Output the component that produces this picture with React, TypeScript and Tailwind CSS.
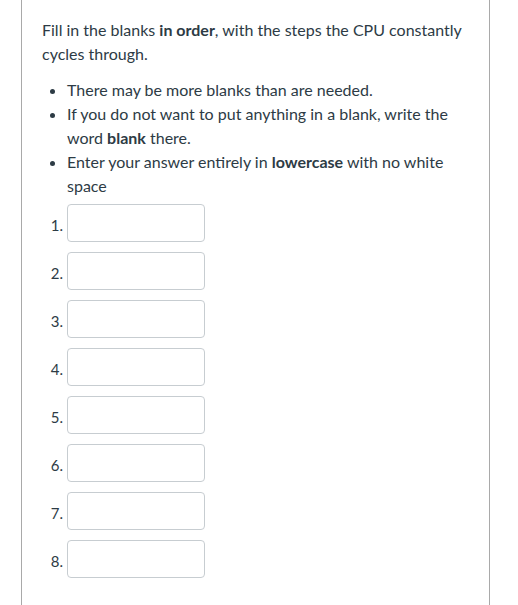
export default function App() {
  const nums = [1, 2, 3, 4, 5, 6, 7, 8];
  return (
    <div className="w-[518px] h-[605px] bg-white overflow-hidden">
      <div className="ml-[21px] w-[469px] h-[605px] border-x border-[#a9a9a9] pl-[20px] pr-[20px] pt-[18px] text-[#2d3b45] text-[16px] leading-[24px]" style={{ fontFamily: "Lato, 'Noto Sans', sans-serif" }}>
        <p>
          Fill in the blanks <strong className="font-bold">in order</strong>, with the steps the CPU constantly cycles through.
        </p>
        <ul className="list-disc pl-[25px] mt-[12px]">
          <li>There may be more blanks than are needed.</li>
          <li>
            If you do not want to put anything in a blank, write the word <strong className="font-bold">blank</strong> there.
          </li>
          <li>
            Enter your answer entirely in <strong className="font-bold">lowercase</strong> with no white space
          </li>
        </ul>
        <div className="mt-[6px] flex flex-col gap-[10px]">
          {nums.map((n) => (
            <div key={n} className="flex items-end">
              <span className="w-[21px] text-right text-[15px] leading-[16px] mb-[9px] text-[#2d3b45]">
                {n}.
              </span>
              <input className="ml-[4px] w-[138px] h-[38px] border border-[#c7cdd1] rounded-[4px] bg-white outline-none" />
            </div>
          ))}
        </div>
      </div>
    </div>
  );
}
